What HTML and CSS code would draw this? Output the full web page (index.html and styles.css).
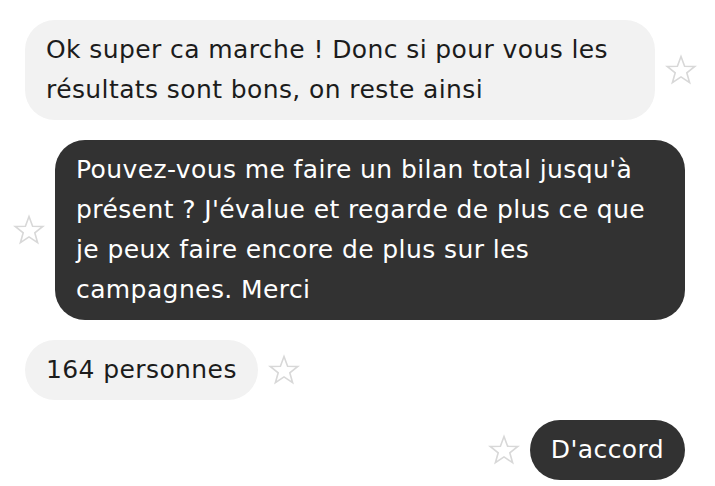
FILE: index.html
```html
<!DOCTYPE html>
<html lang="fr">
<head>
    <meta charset="UTF-8">
    <meta name="viewport" content="width=device-width, initial-scale=1.0">
    <title>Conversation</title>
    <link rel="stylesheet" href="styles.css">
</head>
<body>
    <svg width="0" height="0" class="defs">
        <symbol id="star" viewBox="0 0 32 32">
            <path d="M16 2.5 L19.6 12.2 L29.8 12.5 L21.8 18.8 L24.6 28.7 L16 22.9 L7.4 28.7 L10.2 18.8 L2.2 12.5 L12.4 12.2 Z"/>
        </symbol>
    </svg>

    <div class="chat">
        <div class="row received">
            <div class="bubble">Ok super ca marche ! Donc si pour vous les résultats sont bons, on reste ainsi</div>
            <svg class="star"><use href="#star"/></svg>
        </div>

        <div class="row sent">
            <svg class="star"><use href="#star"/></svg>
            <div class="bubble">Pouvez-vous me faire un bilan total jusqu'à présent ? J'évalue et regarde de plus ce que je peux faire encore de plus sur les campagnes. Merci</div>
        </div>

        <div class="row received">
            <div class="bubble">164 personnes</div>
            <svg class="star"><use href="#star"/></svg>
        </div>

        <div class="row sent">
            <svg class="star"><use href="#star"/></svg>
            <div class="bubble">D'accord</div>
        </div>
    </div>
</body>
</html>
```

FILE: styles.css
```css
/* --- Page --- */
body {
    margin: 0;
    background-color: #fff;
    font-family: 'DejaVu Sans', 'Noto Sans', sans-serif;
    font-size: 25px;
    letter-spacing: 0.4px;
    color: #1c1c1c;
}

.defs {
    position: absolute;
}

.chat {
    display: flex;
    flex-direction: column;
    gap: 20px;
    padding: 20px 18px 20px 13px;
}

/* --- Rows --- */
.row {
    display: flex;
    align-items: center;
    gap: 10px;
}

.row.received {
    padding-left: 12px;
}

.row.sent {
    justify-content: flex-end;
    padding-right: 12px;
}

/* --- Bubbles --- */
.bubble {
    max-width: 630px;
    box-sizing: border-box;
    padding: 10px 21px;
    line-height: 40px;
    border-radius: 30px;
}

.received .bubble {
    background-color: #f2f2f2;
    color: #1c1c1c;
}

.sent .bubble {
    background-color: #323232;
    color: #fff;
}

/* --- Star --- */
.star {
    width: 32px;
    height: 32px;
    flex: 0 0 32px;
    fill: none;
    stroke: #d8d8d8;
    stroke-width: 1.6;
}
```
